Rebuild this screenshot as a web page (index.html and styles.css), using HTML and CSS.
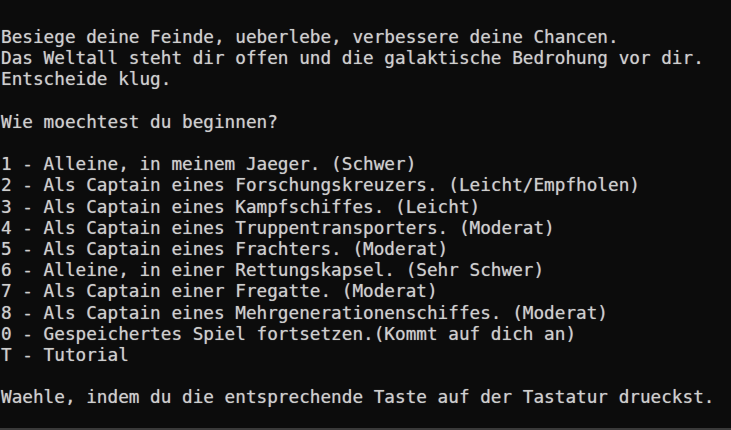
FILE: index.html
```html
<!DOCTYPE html>
<html lang="de">
<head>
<meta charset="utf-8">
<title>Konsole</title>
<link rel="stylesheet" href="styles.css">
</head>
<body>
<main class="console">
<pre class="output">Besiege deine Feinde, ueberlebe, verbessere deine Chancen.
Das Weltall steht dir offen und die galaktische Bedrohung vor dir.
Entscheide klug.

Wie moechtest du beginnen?

1 - Alleine, in meinem Jaeger. (Schwer)
2 - Als Captain eines Forschungskreuzers. (Leicht/Empfholen)
3 - Als Captain eines Kampfschiffes. (Leicht)
4 - Als Captain eines Truppentransporters. (Moderat)
5 - Als Captain eines Frachters. (Moderat)
6 - Alleine, in einer Rettungskapsel. (Sehr Schwer)
7 - Als Captain einer Fregatte. (Moderat)
8 - Als Captain eines Mehrgenerationenschiffes. (Moderat)
0 - Gespeichertes Spiel fortsetzen.(Kommt auf dich an)
T - Tutorial

Waehle, indem du die entsprechende Taste auf der Tastatur drueckst.</pre>
</main>
<div class="scrollbar"></div>
</body>
</html>
```
FILE: styles.css
```css
html, body {
  margin: 0;
  padding: 0;
  background: #0c0c0c;
  width: 731px;
  height: 430px;
  overflow: hidden;
}
body {
  display: flex;
  flex-direction: column;
}
.console {
  flex: 1;
  padding: 27px 0 0 1px;
}
.output {
  margin: 0;
  font-family: "DejaVu Sans Mono", "Liberation Mono", monospace;
  font-size: 17.7px;
  line-height: 21.2px;
  color: #cfcfcf;
  white-space: pre;
  text-shadow: 0 0 1px rgba(210, 210, 210, 0.6);
}
.scrollbar {
  height: 2px;
  background: #3a3a3a;
}
```
